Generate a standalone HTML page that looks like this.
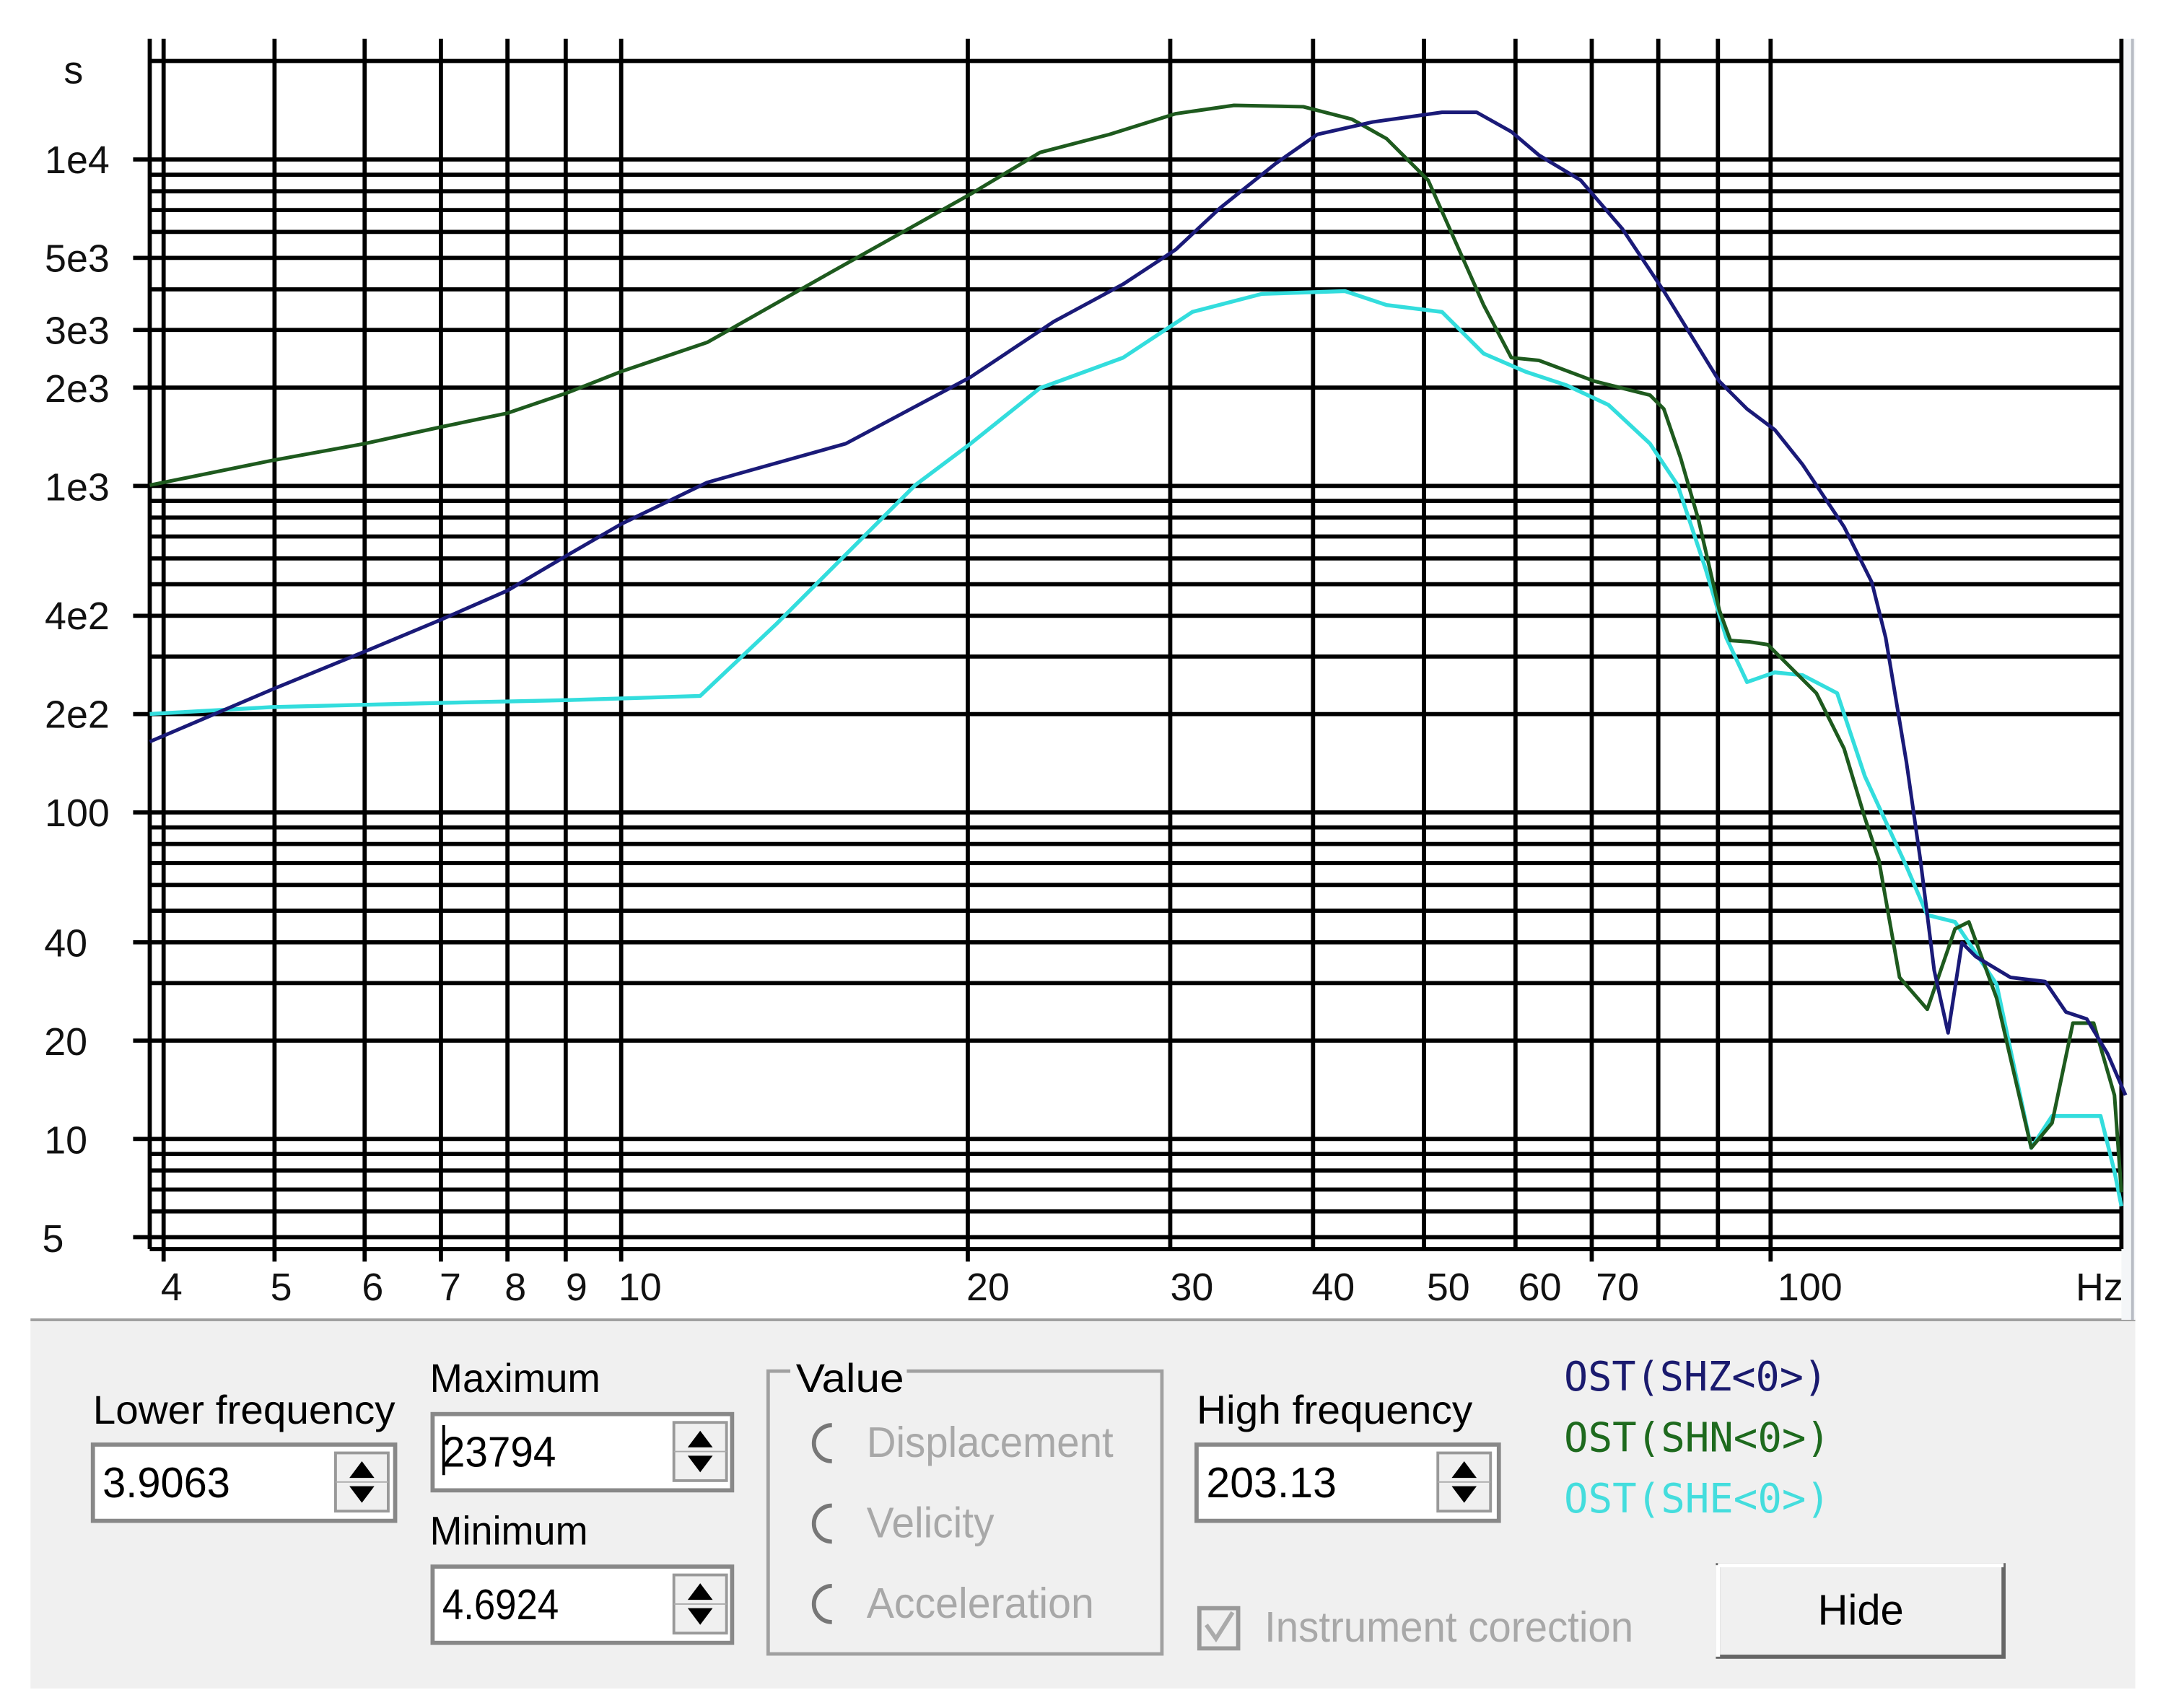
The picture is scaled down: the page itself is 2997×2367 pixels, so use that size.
<!DOCTYPE html>
<html><head><meta charset="utf-8"><style>
html,body{margin:0;padding:0;background:#fff;}
svg{display:block;}
text{font-family:"Liberation Sans",sans-serif;}
</style></head><body>
<svg width="2997" height="2367" viewBox="0 0 1560 1232" preserveAspectRatio="none" xmlns="http://www.w3.org/2000/svg">
<rect x="0" y="0" width="1560" height="1232" fill="#fff"/>
<rect x="22" y="952" width="1518" height="266" fill="#f0f0f0"/>
<line x1="22" y1="952" x2="1540" y2="952" stroke="#a0a0a0" stroke-width="2"/>
<rect x="1530" y="28" width="10" height="924" fill="#f4f6f8"/>
<line x1="1538" y1="28" x2="1538" y2="952" stroke="#b8bcc4" stroke-width="2"/>
<g stroke="#000" stroke-width="3">
<line x1="108" y1="28" x2="108" y2="901"/>
<line x1="118" y1="28" x2="118" y2="910"/>
<line x1="198" y1="28" x2="198" y2="910"/>
<line x1="263" y1="28" x2="263" y2="910"/>
<line x1="318" y1="28" x2="318" y2="910"/>
<line x1="366" y1="28" x2="366" y2="910"/>
<line x1="408" y1="28" x2="408" y2="910"/>
<line x1="448" y1="28" x2="448" y2="910"/>
<line x1="698" y1="28" x2="698" y2="910"/>
<line x1="844" y1="28" x2="844" y2="901"/>
<line x1="947" y1="28" x2="947" y2="901"/>
<line x1="1027" y1="28" x2="1027" y2="901"/>
<line x1="1093" y1="28" x2="1093" y2="901"/>
<line x1="1148" y1="28" x2="1148" y2="910"/>
<line x1="1196" y1="28" x2="1196" y2="901"/>
<line x1="1239" y1="28" x2="1239" y2="901"/>
<line x1="1277" y1="28" x2="1277" y2="910"/>
<line x1="1530" y1="28" x2="1530" y2="901"/>
<line x1="108" y1="44" x2="1530" y2="44"/>
<line x1="96" y1="115" x2="1530" y2="115"/>
<line x1="108" y1="126" x2="1530" y2="126"/>
<line x1="108" y1="138" x2="1530" y2="138"/>
<line x1="108" y1="151.5" x2="1530" y2="151.5"/>
<line x1="108" y1="167.3" x2="1530" y2="167.3"/>
<line x1="96" y1="186" x2="1530" y2="186"/>
<line x1="108" y1="208.7" x2="1530" y2="208.7"/>
<line x1="96" y1="238" x2="1530" y2="238"/>
<line x1="96" y1="279.6" x2="1530" y2="279.6"/>
<line x1="96" y1="350.5" x2="1530" y2="350.5"/>
<line x1="108" y1="361.3" x2="1530" y2="361.3"/>
<line x1="108" y1="373.3" x2="1530" y2="373.3"/>
<line x1="108" y1="387" x2="1530" y2="387"/>
<line x1="108" y1="402.8" x2="1530" y2="402.8"/>
<line x1="108" y1="421.4" x2="1530" y2="421.4"/>
<line x1="96" y1="444.2" x2="1530" y2="444.2"/>
<line x1="108" y1="473.6" x2="1530" y2="473.6"/>
<line x1="96" y1="515.1" x2="1530" y2="515.1"/>
<line x1="96" y1="586" x2="1530" y2="586"/>
<line x1="108" y1="596.8" x2="1530" y2="596.8"/>
<line x1="108" y1="608.8" x2="1530" y2="608.8"/>
<line x1="108" y1="622.5" x2="1530" y2="622.5"/>
<line x1="108" y1="638.3" x2="1530" y2="638.3"/>
<line x1="108" y1="656.9" x2="1530" y2="656.9"/>
<line x1="96" y1="679.7" x2="1530" y2="679.7"/>
<line x1="108" y1="709.1" x2="1530" y2="709.1"/>
<line x1="96" y1="750.6" x2="1530" y2="750.6"/>
<line x1="96" y1="821.5" x2="1530" y2="821.5"/>
<line x1="108" y1="832.3" x2="1530" y2="832.3"/>
<line x1="108" y1="844.3" x2="1530" y2="844.3"/>
<line x1="108" y1="858" x2="1530" y2="858"/>
<line x1="108" y1="873.8" x2="1530" y2="873.8"/>
<line x1="96" y1="892.4" x2="1530" y2="892.4"/>
<line x1="108" y1="901" x2="1530" y2="901"/>
</g>
<g fill="none" stroke-width="2.6" stroke-linejoin="round">
<polyline stroke="#33dddd" stroke-width="2.8" points="108,515 197,510 318,507 410,505 505,502 560,450 610,400 660,350 700,320 750,280 810,258 860,225 910,212 970,210 1000,220 1040,225 1070,255 1100,268 1130,278 1160,292 1190,320 1210,350 1230,410 1245,460 1260,492 1280,485 1300,487 1325,500 1345,560 1375,625 1390,660 1410,665 1440,710 1465,828 1480,805 1515,805 1525,845 1530,870"/>
<polyline stroke="#1e5a1e" points="108,350 197,332 263,320 318,308 366,298 410,283 448,268 510,247 600,196 700,140 750,110 800,97 848,82 890,76 940,77 975,86 1000,100 1030,130 1050,175 1070,220 1090,258 1110,260 1150,275 1190,285 1200,295 1212,330 1225,375 1240,440 1248,462 1262,463 1275,465 1290,480 1310,500 1330,540 1345,590 1355,620 1370,705 1390,728 1410,670 1420,665 1440,720 1465,828 1480,810 1495,738 1510,738 1525,790 1530,860"/>
<polyline stroke="#1a1a78" points="108,535 197,497 263,470 318,447 366,426 410,400 448,378 510,348 610,320 700,272 760,232 810,205 848,180 880,150 920,118 950,97 990,88 1040,81 1065,81 1090,95 1110,112 1140,130 1170,165 1200,210 1240,275 1260,295 1280,310 1300,335 1330,380 1350,420 1360,460 1375,550 1385,620 1395,700 1405,745 1415,680 1425,690 1450,705 1475,708 1490,730 1505,735 1520,760 1533,790"/>
</g>
<g font-size="28" fill="#111" text-anchor="end">
<text x="46" y="60" text-anchor="start">s</text>
<text x="79" y="125">1e4</text>
<text x="79" y="196">5e3</text>
<text x="79" y="248">3e3</text>
<text x="79" y="290">2e3</text>
<text x="79" y="361">1e3</text>
<text x="79" y="454">4e2</text>
<text x="79" y="525">2e2</text>
<text x="79" y="596">100</text>
<text x="63" y="690">40</text>
<text x="63" y="761">20</text>
<text x="63" y="832">10</text>
<text x="46" y="903">5</text>
</g>
<g font-size="28" fill="#111">
<text x="116" y="938">4</text>
<text x="195" y="938">5</text>
<text x="261" y="938">6</text>
<text x="317" y="938">7</text>
<text x="364" y="938">8</text>
<text x="408" y="938">9</text>
<text x="446" y="938">10</text>
<text x="697" y="938">20</text>
<text x="844" y="938">30</text>
<text x="946" y="938">40</text>
<text x="1029" y="938">50</text>
<text x="1095" y="938">60</text>
<text x="1151" y="938">70</text>
<text x="1282" y="938">100</text>
<text x="1497" y="938">Hz</text>
</g>
<g font-size="29" fill="#000">
<text x="67" y="1027" textLength="218" lengthAdjust="spacingAndGlyphs">Lower frequency</text>
<text x="310" y="1004" textLength="123" lengthAdjust="spacingAndGlyphs">Maximum</text>
<text x="310" y="1114" textLength="114" lengthAdjust="spacingAndGlyphs">Minimum</text>
<text x="863" y="1027" textLength="199" lengthAdjust="spacingAndGlyphs">High frequency</text>
</g>
<g>
<rect x="67" y="1042" width="218" height="55" fill="#fff" stroke="#888" stroke-width="3"/>
<rect x="312" y="1020" width="216" height="55" fill="#fff" stroke="#888" stroke-width="3"/>
<rect x="312" y="1130" width="216" height="55" fill="#fff" stroke="#888" stroke-width="3"/>
<rect x="863" y="1042" width="218" height="55" fill="#fff" stroke="#888" stroke-width="3"/>
</g>
<g font-size="31" fill="#000">
<text x="74" y="1080" textLength="92" lengthAdjust="spacingAndGlyphs">3.9063</text>
<text x="319" y="1058" textLength="82" lengthAdjust="spacingAndGlyphs">23794</text>
<text x="319" y="1168" textLength="84" lengthAdjust="spacingAndGlyphs">4.6924</text>
<text x="870" y="1080" textLength="94" lengthAdjust="spacingAndGlyphs">203.13</text>
</g>
<line x1="320" y1="1028" x2="320" y2="1064" stroke="#000" stroke-width="2"/>
<g>
<g transform="translate(242,1048)"><rect x="0" y="0" width="38" height="42" fill="#f0f0f0" stroke="#999" stroke-width="2"/><path d="M10 18 L19 6 L28 18Z M10 24 L28 24 L19 36Z" fill="#000"/><line x1="0" y1="21" x2="38" y2="21" stroke="#aaa"/></g>
<g transform="translate(486,1026)"><rect x="0" y="0" width="38" height="42" fill="#f0f0f0" stroke="#999" stroke-width="2"/><path d="M10 18 L19 6 L28 18Z M10 24 L28 24 L19 36Z" fill="#000"/><line x1="0" y1="21" x2="38" y2="21" stroke="#aaa"/></g>
<g transform="translate(486,1136)"><rect x="0" y="0" width="38" height="42" fill="#f0f0f0" stroke="#999" stroke-width="2"/><path d="M10 18 L19 6 L28 18Z M10 24 L28 24 L19 36Z" fill="#000"/><line x1="0" y1="21" x2="38" y2="21" stroke="#aaa"/></g>
<g transform="translate(1037,1048)"><rect x="0" y="0" width="38" height="42" fill="#f0f0f0" stroke="#999" stroke-width="2"/><path d="M10 18 L19 6 L28 18Z M10 24 L28 24 L19 36Z" fill="#000"/><line x1="0" y1="21" x2="38" y2="21" stroke="#aaa"/></g>
</g>
<rect x="554" y="989" width="284" height="204" fill="none" stroke="#a0a0a0" stroke-width="2.5"/>
<rect x="570" y="975" width="84" height="30" fill="#f0f0f0"/>
<text x="574" y="1004" font-size="29" fill="#000" textLength="78" lengthAdjust="spacingAndGlyphs">Value</text>
<g fill="none" stroke="#777" stroke-width="3">
<path d="M600 1028 A13 13 0 1 0 600 1054"/>
<path d="M600 1086 A13 13 0 1 0 600 1112"/>
<path d="M600 1144 A13 13 0 1 0 600 1170"/>
</g>
<g font-size="31" fill="#a8a8a8">
<text x="625" y="1051" textLength="178" lengthAdjust="spacingAndGlyphs">Displacement</text>
<text x="625" y="1109" textLength="92" lengthAdjust="spacingAndGlyphs">Velicity</text>
<text x="625" y="1167" textLength="164" lengthAdjust="spacingAndGlyphs">Acceleration</text>
</g>
<rect x="865" y="1160" width="28" height="29" fill="#f0f0f0" stroke="#999" stroke-width="3"/>
<path d="M870 1172 L877 1182 L889 1163" fill="none" stroke="#aaa" stroke-width="3"/>
<text x="912" y="1184" font-size="31" fill="#a8a8a8" textLength="266" lengthAdjust="spacingAndGlyphs">Instrument corection</text>
<g font-size="29">
<text x="1128" y="1003" fill="#1a1a6e" textLength="190" lengthAdjust="spacingAndGlyphs" style="font-family:'DejaVu Sans Mono',monospace">OST(SHZ&lt;0&gt;)</text>
<text x="1128" y="1047" fill="#1e6a1e" textLength="192" lengthAdjust="spacingAndGlyphs" style="font-family:'DejaVu Sans Mono',monospace">OST(SHN&lt;0&gt;)</text>
<text x="1128" y="1091" fill="#44dddd" textLength="192" lengthAdjust="spacingAndGlyphs" style="font-family:'DejaVu Sans Mono',monospace">OST(SHE&lt;0&gt;)</text>
</g>
<rect x="1239" y="1129" width="206" height="66" fill="#f0f0f0" stroke="#666" stroke-width="3"/>
<line x1="1239" y1="1129" x2="1445" y2="1129" stroke="#fff" stroke-width="3"/>
<line x1="1239" y1="1129" x2="1239" y2="1195" stroke="#fff" stroke-width="3"/>
<text x="1342" y="1172" font-size="31" fill="#000" text-anchor="middle" textLength="62" lengthAdjust="spacingAndGlyphs">Hide</text>
</svg>
</body></html>
